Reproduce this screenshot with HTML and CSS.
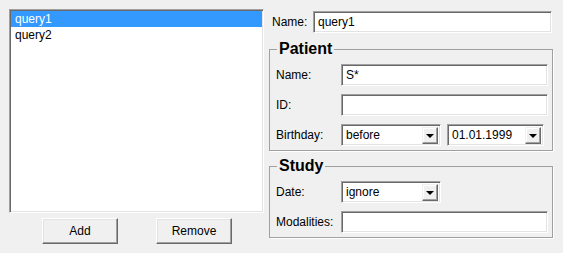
FILE: index.html
```html
<!DOCTYPE html>
<html lang="en">

<head>
    <meta charset="UTF-8">
    <title>Queries</title>
    <link rel="stylesheet" href="styles.css">
</head>

<body>
    <div class="window">
        <div class="leftside">
            <div class="listbox">
                <div class="item selected">query1</div>
                <div class="item">query2</div>
            </div>
            <div class="buttons">
                <div class="btn">Add</div>
                <div class="btn">Remove</div>
            </div>
        </div>
        <div class="rightside">
            <div class="row toprow">
                <span class="label shortlabel">Name:</span>
                <div class="field wide">query1</div>
            </div>
            <fieldset class="group">
                <legend>Patient</legend>
                <div class="row">
                    <span class="label">Name:</span>
                    <div class="field">S*</div>
                </div>
                <div class="row">
                    <span class="label">ID:</span>
                    <div class="field"></div>
                </div>
                <div class="row">
                    <span class="label">Birthday:</span>
                    <div class="combo">
                        <span class="value">before</span>
                        <span class="arrow"><span class="tri"></span></span>
                    </div>
                    <div class="combo datecombo">
                        <span class="value">01.01.1999</span>
                        <span class="arrow"><span class="tri"></span></span>
                    </div>
                </div>
            </fieldset>
            <fieldset class="group study">
                <legend>Study</legend>
                <div class="row">
                    <span class="label">Date:</span>
                    <div class="combo">
                        <span class="value">ignore</span>
                        <span class="arrow"><span class="tri"></span></span>
                    </div>
                </div>
                <div class="row">
                    <span class="label">Modalities:</span>
                    <div class="field"></div>
                </div>
            </fieldset>
        </div>
    </div>
</body>

</html>
```

FILE: styles.css
```css
body {
    margin: 0;
    background-color: #f0f0f0;
    font-family: 'Liberation Sans', Arial, sans-serif;
    font-size: 12px;
    color: #000;
}

.window {
    display: flex;
    padding: 9px 0 0 9px;
    gap: 5px;
}

/* left part: list and buttons */
.leftside {
    width: 255px;
}

.listbox {
    box-sizing: border-box;
    height: 204px;
    background-color: #fff;
    border: 1px solid;
    border-color: #a0a0a0 #fff #fff #a0a0a0;
    box-shadow: inset 1px 1px 0 #696969, inset -1px -1px 0 #e3e3e3;
    padding: 1px 1px 1px 1px;
}

.item {
    height: 16px;
    line-height: 16px;
    padding-left: 4px;
}

.selected {
    background-color: #3399ff;
    color: #fff;
    outline: 1px dotted #c8783c;
    outline-offset: -1px;
}

.buttons {
    display: flex;
    justify-content: center;
    gap: 38px;
    margin-top: 5px;
    padding-left: 1px;
}

.btn {
    box-sizing: border-box;
    width: 76px;
    height: 26px;
    line-height: 25px;
    text-align: center;
    background-color: #f0f0f0;
    border: 1px solid;
    border-color: #fff #696969 #696969 #fff;
    box-shadow: inset -1px -1px 0 #a0a0a0, inset 1px 1px 0 #e3e3e3;
}

/* right part: form */
.rightside {
    width: 284px;
    padding-top: 2px;
}

.row {
    display: flex;
    align-items: center;
    height: 22px;
    margin-bottom: 8px;
}

.row:last-child {
    margin-bottom: 0;
}

.toprow {
    margin-bottom: 7px;
    padding-left: 3px;
}

.label {
    width: 65px;
    flex-shrink: 0;
}

.shortlabel {
    width: 41px;
}

.field,
.combo {
    box-sizing: border-box;
    height: 22px;
    line-height: 20px;
    background-color: #fff;
    border: 1px solid;
    border-color: #a0a0a0 #fff #fff #a0a0a0;
    box-shadow: inset 1px 1px 0 #696969, inset -1px -1px 0 #e3e3e3;
    padding-left: 4px;
}

.field {
    width: 207px;
}

.field.wide {
    width: 239px;
}

.combo {
    display: flex;
    width: 100px;
    padding: 2px 2px 2px 4px;
    line-height: 17px;
}

.datecombo {
    width: 97px;
    margin-left: 6px;
}

.value {
    flex: 1;
}

.arrow {
    box-sizing: border-box;
    width: 16px;
    height: 17px;
    display: flex;
    align-items: center;
    justify-content: center;
    background-color: #f0f0f0;
    border: 1px solid;
    border-color: #f0f0f0 #696969 #696969 #f0f0f0;
    box-shadow: inset -1px -1px 0 #a0a0a0, inset 1px 1px 0 #fff;
}

.tri {
    width: 0;
    height: 0;
    border-left: 4px solid transparent;
    border-right: 4px solid transparent;
    border-top: 4px solid #000;
    margin-top: 1px;
}

.group {
    margin: 0;
    border: 1px solid #a0a0a0;
    box-shadow: 1px 1px 0 #fff;
    padding: 6px 4px 4px 6px;
    min-width: 0;
}

.group legend {
    font-size: 16px;
    font-weight: bold;
    line-height: 18px;
    padding: 0 2px;
    margin-left: 1px;
}

.study {
    margin-top: 6px;
}
```
